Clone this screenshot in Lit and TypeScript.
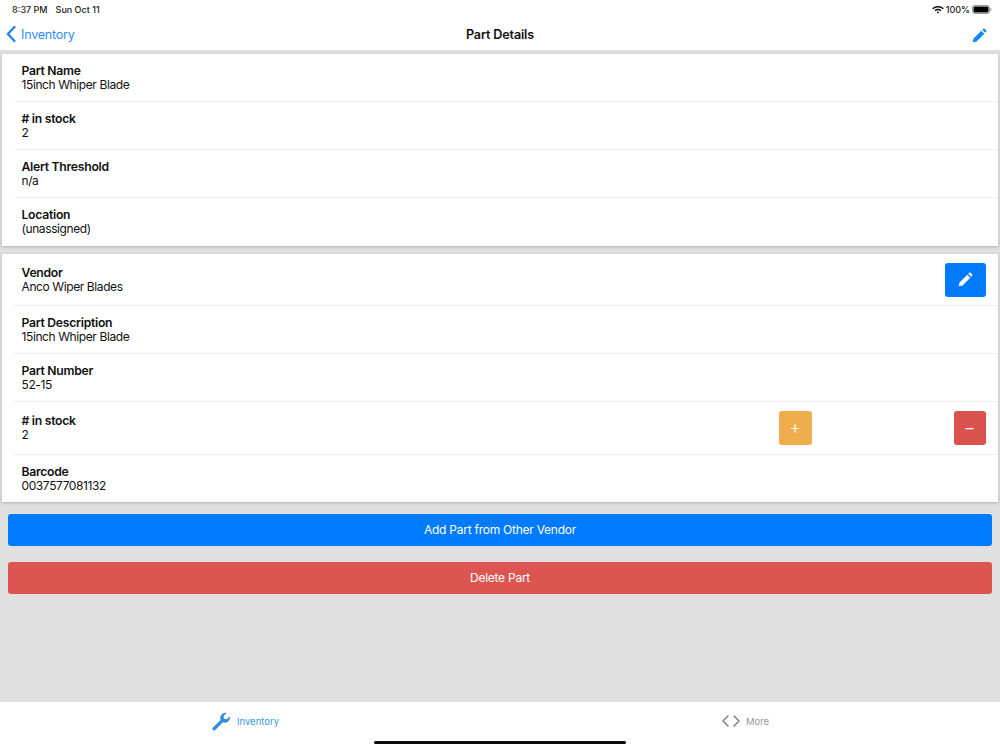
import { LitElement, html, css } from "lit";
import { customElement } from "lit/decorators.js";

const pencil = html`<svg viewBox="0 0 16 16" width="100%" height="100%"><path fill="currentColor" d="M0.8 15.2 L1.6 11.2 L9.9 2.9 L13.1 6.1 L4.8 14.4 Z M10.9 1.9 L12.1 0.9 Q12.8 0.4 13.5 0.9 L15.1 2.5 Q15.6 3.2 15.1 3.9 L14.1 5.1 Z"/></svg>`;

@customElement("app-root")
export class AppRoot extends LitElement {
  static styles = css`
    :host { display: flex; flex-direction: column; width: 1000px; height: 750px; position: relative; background: #e0e0e0; font-family: Inter, "Noto Sans", sans-serif; color: #111; overflow: hidden; }
    .top { background: #fff; height: 50px; flex: none; display: flex; flex-direction: column; }
    .status { height: 18px; display: flex; align-items: center; justify-content: space-between; padding: 0 8px 0 12px; font-size: 9px; font-weight: 500; color: #222; }
    .status .left { display: flex; gap: 8px; }
    .status .right { display: flex; align-items: center; gap: 2px; }
    .nav { flex: 1; display: grid; grid-template-columns: 1fr auto 1fr; align-items: center; padding: 0 13px; }
    .back { display: flex; align-items: center; gap: 5px; margin-left: -7px; color: #2f8ff5; font-size: 12.6px; letter-spacing: -0.25px; }
    .title { font-size: 12.6px; font-weight: 600; letter-spacing: -0.15px; }
    .edit { justify-self: end; width: 15px; height: 15px; color: #1585f5; }
    main { flex: 1; display: flex; flex-direction: column; padding: 4px 2px 0; }
    .card { background: #fff; box-shadow: 0 1px 3px rgba(0,0,0,.22); padding: 0 0 0 12px; margin-bottom: 8px; }
    .row { display: flex; align-items: center; height: 47px; box-sizing: content-box; border-bottom: 1px solid #eee; padding: 0 12px 0 7.5px; font-size: 12px; line-height: 14px; letter-spacing: -0.4px; }
    .row:last-child { border-bottom: none; height: 48px; }
    .row.vendor { height: 51px; }
    .row.stock { height: 52px; }
    .row.barcode { height: 47px; }
    .info { flex: 1; padding-top: 1px; }
    .row:last-child .info, .stock .info { padding-top: 0; }
    .info b { display: block; font-weight: 600; font-size: 12.2px; letter-spacing: -0.27px; }
    .btn { width: 32.5px; height: 34px; border-radius: 3px; display: flex; align-items: center; justify-content: center; color: #fff; font-size: 18px; font-weight: 300; letter-spacing: 0; }
    .btn.edit-btn { width: 41px; background: #007bff; }
    .btn.edit-btn span { width: 15px; height: 15px; display: block; }
    .btn.plus { background: #f0ad4e; margin-right: 142px; }
    .btn.minus { background: #d9534f; }
    .actions { display: flex; flex-direction: column; gap: 16px; padding: 4px 6px 0; }
    .action { height: 32px; box-sizing: border-box; padding-bottom: 2px; border-radius: 3px; color: #fff; font-size: 12px; letter-spacing: -0.25px; display: flex; align-items: center; justify-content: center; }
    .action.blue { background: #007bff; }
    .action.red { background: #dc5550; }
    .tabs { height: 48px; flex: none; background: #fff; display: grid; grid-template-columns: 1fr 1fr; }
    .tab { display: flex; align-items: center; justify-content: center; gap: 6px; font-size: 9.5px; height: 38px; padding-right: 9px; }
    .tab.on { color: #3b97e0; }
    .tab.off { color: #9a9a9a; }
    .tab.off svg { color: #777; }
    .home { position: absolute; left: 374px; bottom: 6px; width: 252px; height: 3px; border-radius: 2px; background: #0a0a0a; }
  `;

  private row(label: string, value: string, cls = "", extra: unknown = "") {
    return html`<div class="row ${cls}"><div class="info"><b>${label}</b>${value}</div>${extra}</div>`;
  }

  render() {
    return html`
      <div class="top">
        <div class="status">
          <div class="left"><span>8:37 PM</span><span>Sun Oct 11</span></div>
          <div class="right">
            <svg width="12" height="9" viewBox="0 0 12 9"><path fill="#111" d="M6 1a8 8 0 0 1 5.8 2.3l-1 1A6.5 6.5 0 0 0 6 2.5a6.5 6.5 0 0 0-4.8 1.8l-1-1A8 8 0 0 1 6 1Zm0 2.8a4.6 4.6 0 0 1 3.5 1.4l-1 1A3.4 3.4 0 0 0 6 5.2c-1 0-1.8.3-2.5 1l-1-1A4.6 4.6 0 0 1 6 3.8Zm0 2.7c.6 0 1 .2 1.4.5L6 8.6 4.6 7c.4-.3.8-.5 1.4-.5Z"/></svg>
            <span>100%</span>
            <svg width="20" height="9" viewBox="0 0 20 9"><rect x=".5" y=".5" width="17" height="8" rx="2" fill="#fff" stroke="#999"/><rect x="1.5" y="1.5" width="15" height="6" rx="1" fill="#000"/><rect x="18.3" y="3" width="1" height="3" rx=".5" fill="#999"/></svg>
          </div>
        </div>
        <div class="nav">
          <div class="back">
            <svg width="10" height="16" viewBox="0 0 10 16"><path d="M8.5 1 1.8 8l6.7 7" fill="none" stroke="#1585f5" stroke-width="2.2" stroke-linecap="round" stroke-linejoin="round"/></svg>
            <span>Inventory</span>
          </div>
          <div class="title">Part Details</div>
          <div class="edit">${pencil}</div>
        </div>
      </div>
      <main>
        <div class="card">
          ${this.row("Part Name", "15inch Whiper Blade")}
          ${this.row("# in stock", "2")}
          ${this.row("Alert Threshold", "n/a")}
          ${this.row("Location", "(unassigned)")}
        </div>
        <div class="card">
          ${this.row("Vendor", "Anco Wiper Blades", "vendor", html`<div class="btn edit-btn"><span>${pencil}</span></div>`)}
          ${this.row("Part Description", "15inch Whiper Blade")}
          ${this.row("Part Number", "52-15")}
          ${this.row("# in stock", "2", "stock", html`<div class="btn plus">+</div><div class="btn minus">−</div>`)}
          ${this.row("Barcode", "0037577081132", "barcode")}
        </div>
        <div class="actions">
          <div class="action blue">Add Part from Other Vendor</div>
          <div class="action red">Delete Part</div>
        </div>
      </main>
      <div class="tabs">
        <div class="tab on">
          <svg width="19" height="19" viewBox="0 0 19 19"><path fill="#2f8fdc" d="M1 15.6 8.6 8a5 5 0 0 1 .9-5.2A5 5 0 0 1 14.6 1l-3 3 .4 2.8 2.8.4 3-3a5 5 0 0 1-1.7 5.2 5 5 0 0 1-5.2.9l-7.6 7.6a1.6 1.6 0 0 1-2.3 0 1.6 1.6 0 0 1 0-2.3Z"/></svg>
          <span>Inventory</span>
        </div>
        <div class="tab off">
          <svg width="18" height="12" viewBox="0 0 18 12"><path d="M6 1 1 6l5 5M12 1l5 5-5 5" fill="none" stroke="currentColor" stroke-width="1.4" stroke-linecap="round" stroke-linejoin="round"/></svg>
          <span>More</span>
        </div>
      </div>
      <div class="home"></div>
    `;
  }
}
